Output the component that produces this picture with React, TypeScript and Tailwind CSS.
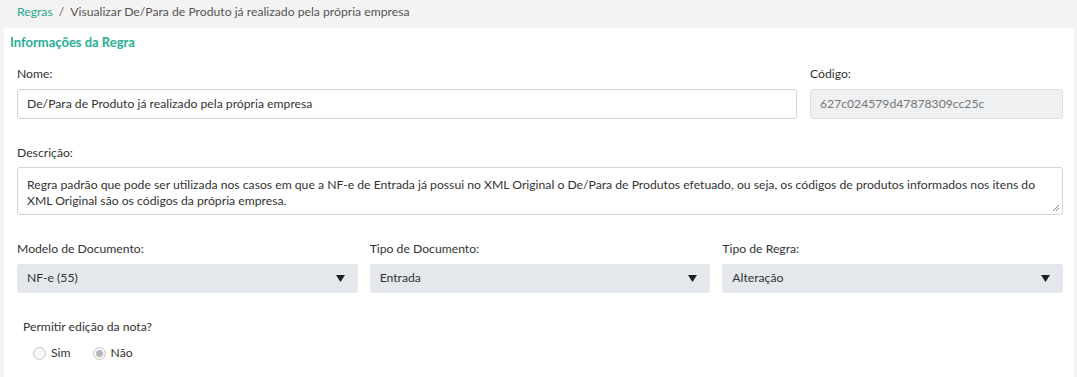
import React from 'react'

// ============================================================================
// FIELDS
// ============================================================================

const font = { fontFamily: '"Lato", "Liberation Sans", sans-serif' }

function Label({ children, className = '' }: { children: React.ReactNode; className?: string }) {
  return <div className={`text-[12.2px] leading-4 text-[#333] ${className}`}>{children}</div>
}

function SelectBox({ value }: { value: string }) {
  return (
    <div className="flex h-[29px] items-center justify-between rounded-[3px] bg-[#e4e7eb] pl-[10px] pr-[13px] text-[12.2px] text-[#333]">
      <span>{value}</span>
      <svg width="9" height="7" viewBox="0 0 9 7">
        <path d="M0 0 H9 L4.5 7 Z" fill="#1f1f1f" />
      </svg>
    </div>
  )
}

function Radio({ label, checked }: { label: string; checked?: boolean }) {
  return (
    <div className="flex items-center gap-[5px]">
      <span className="flex h-[13px] w-[13px] items-center justify-center rounded-full border border-[#c8c8c8] bg-[#f7f7f7]">
        {checked && <span className="h-[7px] w-[7px] rounded-full bg-[#b5b5b5]" />}
      </span>
      <span className="text-[12.2px] text-[#333]">{label}</span>
    </div>
  )
}

// ============================================================================
// PAGE
// ============================================================================

export default function App() {
  return (
    <div className="h-[377px] w-[1077px] overflow-hidden bg-[#f3f3f3]" style={font}>
      {/* Breadcrumb */}
      <div className="flex h-[28px] items-center pb-[4px] pl-[17px] text-[12.2px] text-[#555]">
        <span className="text-[#26a98f]">Regras</span>
        <span className="mx-[6px] text-[#666]">/</span>
        <span>Visualizar De/Para de Produto já realizado pela própria empresa</span>
      </div>

      {/* Panel */}
      <div className="ml-[4px] mr-[3px] h-[349px] bg-white pt-[6px]">
        <div className="pl-[6px] text-[13px] font-bold leading-4 text-[#26b094]">Informações da Regra</div>

        <div className="px-[13px] pr-[11px]">
          {/* Nome / Código */}
          <div className="mt-[16px] flex gap-[13px]">
            <div className="w-[780px]">
              <Label className="mb-[7px]">Nome:</Label>
              <div className="flex h-[30px] items-center rounded-[3px] border border-[#cfd4d9] pl-[9px] text-[12.2px] text-[#333]">
                De/Para de Produto já realizado pela própria empresa
              </div>
            </div>
            <div className="flex-1">
              <Label className="mb-[7px]">Código:</Label>
              <div className="flex h-[30px] items-center rounded-[3px] border border-[#dadde1] bg-[#eef0f2] pl-[9px] text-[12.2px] text-[#777]">
                627c024579d47878309cc25c
              </div>
            </div>
          </div>

          {/* Descrição */}
          <Label className="mt-[26px] mb-[6px]">Descrição:</Label>
          <div className="relative h-[48px] overflow-hidden rounded-[3px] border border-[#cfd4d9] pl-[9px] pt-[9px] text-[12.2px] leading-4 text-[#333]">
            <div className="whitespace-nowrap">
              Regra padrão que pode ser utilizada nos casos em que a NF-e de Entrada já possui no XML Original o De/Para de Produtos efetuado, ou seja, os códigos de produtos informados nos itens do
            </div>
            <div className="whitespace-nowrap">XML Original são os códigos da própria empresa.</div>
            <svg className="absolute bottom-[2px] right-[2px]" width="8" height="8" viewBox="0 0 8 8">
              <path d="M7 1 L1 7 M7 4 L4 7" stroke="#888" strokeWidth="1" />
            </svg>
          </div>

          {/* Selects */}
          <div className="mt-[26px] grid grid-cols-3 gap-x-[12px]">
            <div>
              <Label className="mb-[7px]">Modelo de Documento:</Label>
              <SelectBox value="NF-e (55)" />
            </div>
            <div>
              <Label className="mb-[7px]">Tipo de Documento:</Label>
              <SelectBox value="Entrada" />
            </div>
            <div>
              <Label className="mb-[7px]">Tipo de Regra:</Label>
              <SelectBox value="Alteração" />
            </div>
          </div>

          {/* Permitir edição */}
          <div className="mt-[26px] pl-[6px]">
            <Label>Permitir edição da nota?</Label>
            <div className="mt-[9px] flex items-center gap-[22px] pl-[10px]">
              <Radio label="Sim" />
              <Radio label="Não" checked />
            </div>
          </div>
        </div>
      </div>
    </div>
  )
}
